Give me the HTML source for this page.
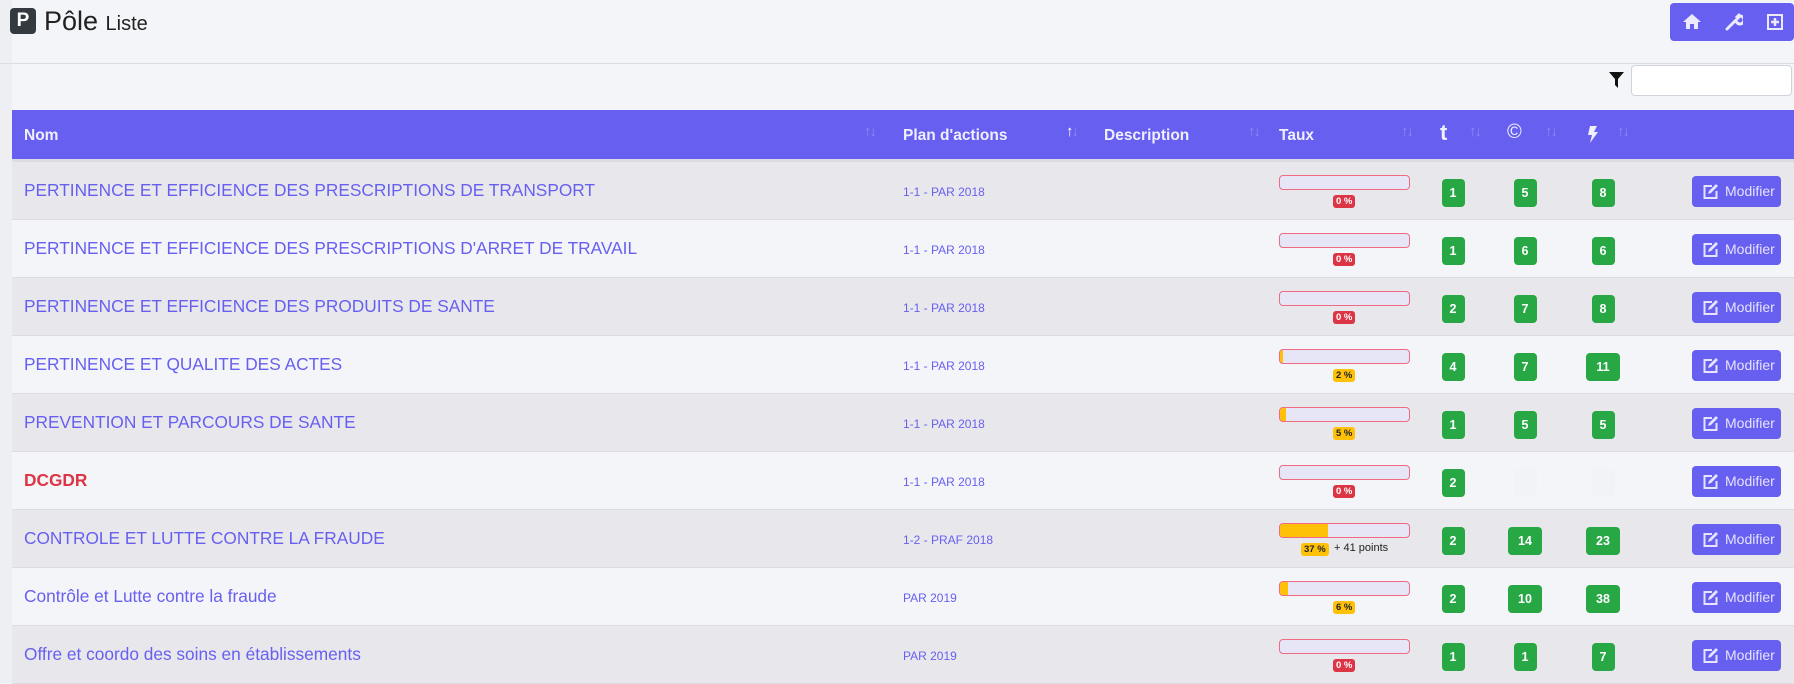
<!DOCTYPE html>
<html><head><meta charset="utf-8"><style>
*{box-sizing:border-box;margin:0;padding:0}
body{width:1794px;height:683px;overflow:hidden;background:#f4f5f9;font-family:"Liberation Sans",sans-serif;position:relative}
.a{position:absolute}
.hd{color:#f0efff;font-weight:bold;font-size:15.5px;top:127px}
.ar{color:#8f88f5;font-size:15px;top:123px;letter-spacing:-2px}
.row{position:absolute;left:12px;width:1782px;height:58px;border-bottom:1px solid #dcdce2}
.nm{position:absolute;left:12px;top:18px;font-size:17.3px;color:#675ff0}
.pl{position:absolute;left:891px;top:23px;font-size:12px;color:#675ff0}
.bar{position:absolute;left:1267px;top:13px;width:131px;height:15px;border:1.5px solid #f06a84;border-radius:4px;background:#e6e6f7;overflow:hidden}
.bar i{display:block;height:100%;background:#ffc107}
.pill{position:absolute;top:33px;height:13px;line-height:13px;font-size:9.5px;font-weight:bold;border-radius:3px;padding:0 3px;color:#fff;background:#dc3545}
.pill.w{background:#ffc107;color:#222}
.bd{position:absolute;top:17px;height:28px;min-width:23px;padding:0 6px;border-radius:4px;background:#28a745;color:#fff;font-weight:bold;font-size:12.5px;line-height:28px;text-align:center}
.bd.e{background:#f2f3f7}
.btn{position:absolute;left:1680px;top:14px;width:89px;height:31px;border-radius:4px;background:#675ff0;color:#e6e3ff;font-size:14px;line-height:31px;padding-left:33px}
.btn svg{position:absolute;left:11px;top:8px}
</style></head><body>
<div class="a" style="left:0;top:0;width:12px;height:683px;background:#eeeff3"></div>
<div class="a" style="left:10px;top:8px;width:26px;height:26px;background:#343a40;border-radius:4px;color:#fff;font-weight:bold;font-size:19px;line-height:26px;text-align:center">P</div>
<div class="a" style="left:44px;top:6px;font-size:27px;color:#222">Pôle <span style="font-size:20px">Liste</span></div>
<div class="a" style="left:0;top:63px;width:1794px;height:1px;background:#dcdde2"></div>
<div class="a" style="left:1670px;top:3px;width:124px;height:38px;background:#675ff0;border-radius:4px"></div>
<svg class="a" style="left:1682px;top:13px" width="20" height="17" viewBox="0 0 20 17"><path d="M10 1L1 9h3v7h4v-5h4v5h4V9h3z" fill="#eceaff"/></svg>
<svg class="a" style="left:1725px;top:13px" width="18" height="18" viewBox="0 0 18 18"><path d="M2 16l8-8M11 7a4 4 0 1 0 4-4l-2 2-1-1 2-2" stroke="#eceaff" stroke-width="3" fill="none" stroke-linecap="round"/></svg>
<svg class="a" style="left:1767px;top:14px" width="16" height="16" viewBox="0 0 16 16"><rect x="1" y="1" width="14" height="14" fill="none" stroke="#eceaff" stroke-width="2"/><path d="M8 4v8M4 8h8" stroke="#eceaff" stroke-width="2.5"/></svg>
<svg class="a" style="left:1609px;top:72px" width="15" height="16" viewBox="0 0 15 16"><path d="M0 0h15L9 7v9L6 13V7z" fill="#111"/></svg>
<div class="a" style="left:1631px;top:65px;width:161px;height:31px;background:#fff;border:1px solid #ced4da;border-radius:4px"></div>
<div class="a" style="left:12px;top:110px;width:1782px;height:50px;background:#675ff0"></div>
<div class="a" style="left:12px;top:159px;width:1782px;height:3px;background:#dcdce2"></div>
<div class="a hd" style="left:24px">Nom</div><div class="a ar" style="left:864px">↑↓</div>
<div class="a hd" style="left:903px">Plan d'actions</div><div class="a ar" style="left:1066px"><span style="color:#fff">↑</span>↓</div>
<div class="a hd" style="left:1104px">Description</div><div class="a ar" style="left:1248px">↑↓</div>
<div class="a hd" style="left:1279px">Taux</div><div class="a ar" style="left:1401px">↑↓</div>
<div class="a hd" style="left:1440px;font-size:22px;top:120px">t</div><div class="a ar" style="left:1469px">↑↓</div>
<div class="a hd" style="left:1507px;font-size:20px;top:121px;font-weight:normal">©</div><div class="a ar" style="left:1545px">↑↓</div>
<svg class="a" style="left:1587px;top:126px" width="12" height="17" viewBox="0 0 12 17"><path d="M3 0h7L7 6h4L3 17l2-8H1z" fill="#f0efff"/></svg><div class="a ar" style="left:1617px">↑↓</div>
<div id="rows"></div>
<script>
var d=[["PERTINENCE ET EFFICIENCE DES PRESCRIPTIONS DE TRANSPORT","1-1 - PAR 2018",0,"1","5","8"],
["PERTINENCE ET EFFICIENCE DES PRESCRIPTIONS D'ARRET DE TRAVAIL","1-1 - PAR 2018",0,"1","6","6"],
["PERTINENCE ET EFFICIENCE DES PRODUITS DE SANTE","1-1 - PAR 2018",0,"2","7","8"],
["PERTINENCE ET QUALITE DES ACTES","1-1 - PAR 2018",2,"4","7","11"],
["PREVENTION ET PARCOURS DE SANTE","1-1 - PAR 2018",5,"1","5","5"],
["DCGDR","1-1 - PAR 2018",0,"2","",""],
["CONTROLE ET LUTTE CONTRE LA FRAUDE","1-2 - PRAF 2018",37,"2","14","23"],
["Contrôle et Lutte contre la fraude","PAR 2019",6,"2","10","38"],
["Offre et coordo des soins en établissements","PAR 2019",0,"1","1","7"]];
var h="";
d.forEach(function(r,i){
var bg=i%2==0?"#e8e8ec":"#f4f5f9";
var nm=r[0]=="DCGDR"?'<div class="nm" style="color:#dc3545;font-weight:bold">DCGDR</div>':'<div class="nm">'+r[0]+'</div>';
var pill=r[2]==0?'<div class="pill" style="left:1321px">0 %</div>':(r[2]==37?'<div class="pill w" style="left:1289px">37 %</div><div style="position:absolute;left:1322px;top:32px;font-size:11px;color:#222">+ 41 points</div>':'<div class="pill w" style="left:1321px">'+r[2]+' %</div>');
function b(v,c){var w=v.length>1?34:23;return '<div class="bd'+(v?'':' e')+'" style="left:'+(c-12-w/2)+'px;min-width:'+w+'px;padding:0">'+v+'</div>';}
h+='<div class="row" style="top:'+(162+i*58)+'px;background:'+bg+'">'+nm+'<div class="pl">'+r[1]+'</div><div class="bar"><i style="width:'+r[2]+'%"></i></div>'+pill+b(r[3],1453)+b(r[4],1525)+b(r[5],1603)+
'<div class="btn"><svg width="16" height="15" viewBox="0 0 16 15"><path d="M9 2H1.5v12h12V7" fill="none" stroke="#e6e3ff" stroke-width="2"/><path d="M5 10l1-3 7-7 2 2-7 7z" fill="#e6e3ff"/></svg>Modifier</div></div>';
});
document.getElementById("rows").innerHTML=h;
</script>
</body></html>
